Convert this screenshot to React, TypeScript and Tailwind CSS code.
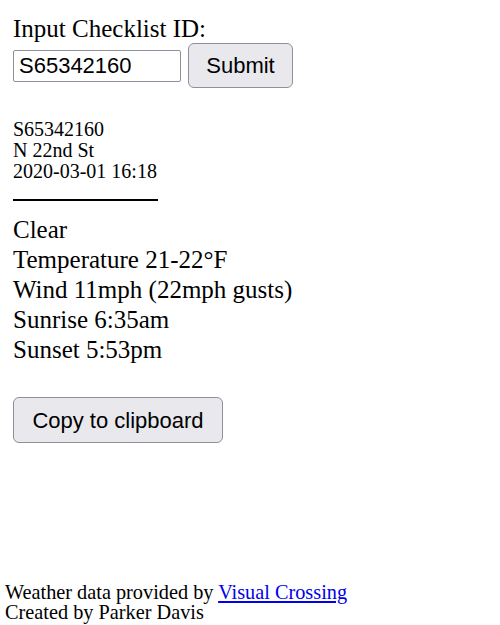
export default function App() {
  const id = "S65342160"

  return (
    <div className="flex min-h-[625px] flex-col font-['Liberation_Serif',serif] text-black">
      <div className="px-[13px] pt-[14px]">
        <h1 className="text-[25px] leading-[30px]">Input Checklist ID:</h1>
        <form className="mt-[-1px] flex items-center gap-[7px]" onSubmit={(e) => e.preventDefault()}>
          <input
            defaultValue={id}
            className="h-[32px] w-[168px] rounded-[2px] border border-[#8f8f9d] px-[5px] font-['Liberation_Sans',sans-serif] text-[22px] outline-none"
          />
          <button
            type="submit"
            className="h-[45px] w-[105px] rounded-[6px] border border-[#8f8f9d] bg-[#e9e9ed] font-['Liberation_Sans',sans-serif] text-[22px]"
          >
            Submit
          </button>
        </form>

        <div className="mt-[31px] text-[20px] leading-[21px]">
          <div>{id}</div>
          <div>N 22nd St</div>
          <div>2020-03-01 16:18</div>
        </div>
        <div className="mt-[17px] h-[2px] w-[145px] bg-black" />

        <div className="mt-[14px] text-[25px] leading-[30px]">
          <div>Clear</div>
          <div>Temperature 21-22°F</div>
          <div>Wind 11mph (22mph gusts)</div>
          <div>Sunrise 6:35am</div>
          <div>Sunset 5:53pm</div>
        </div>

        <button className="mt-[32px] h-[46px] w-[210px] rounded-[6px] border border-[#8f8f9d] bg-[#e9e9ed] font-['Liberation_Sans',sans-serif] text-[22px]">
          Copy to clipboard
        </button>
      </div>

      <footer className="mt-auto px-[5px] pb-[3px] text-[20.3px] leading-[20px]">
        <div>
          Weather data provided by{" "}
          <a href="#" className="text-[#0000ee] underline">
            Visual Crossing
          </a>
        </div>
        <div>Created by Parker Davis</div>
      </footer>
    </div>
  )
}
